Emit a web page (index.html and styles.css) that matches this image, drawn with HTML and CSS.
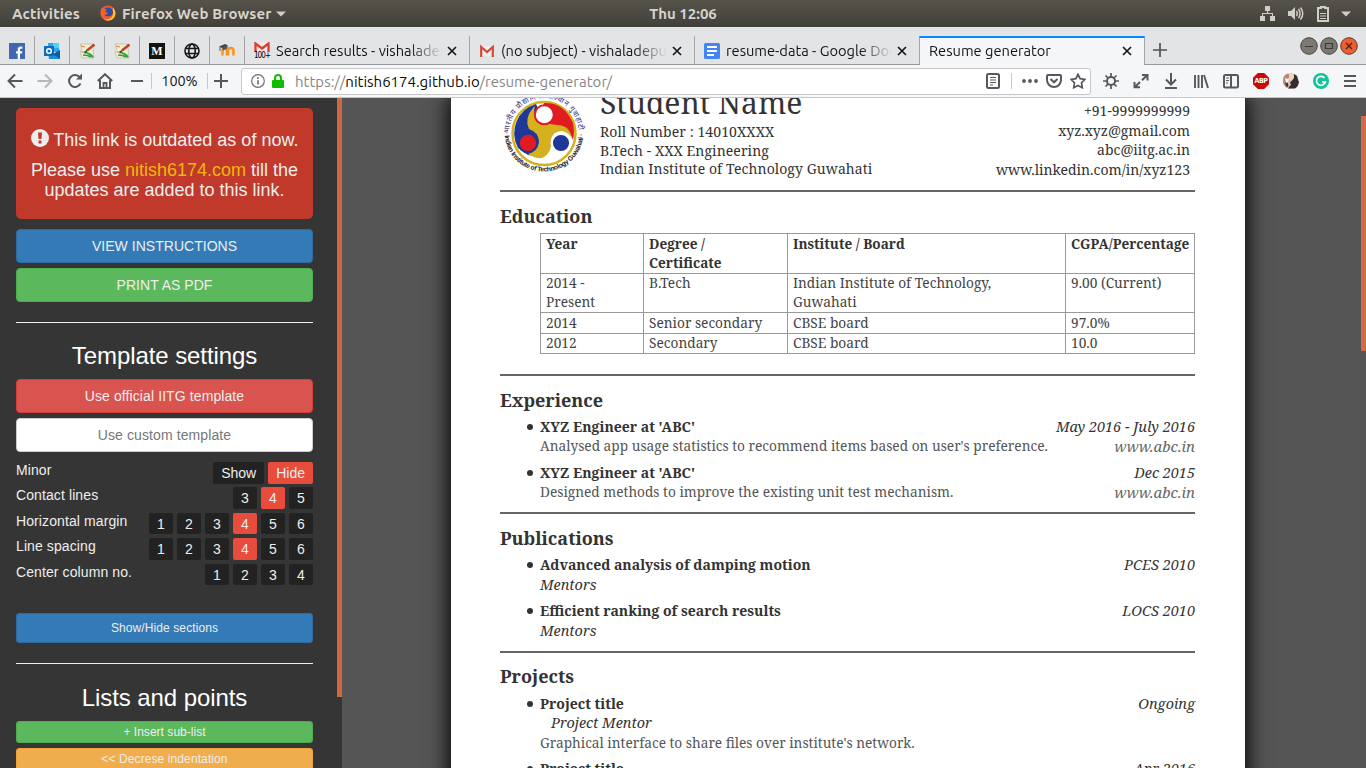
FILE: index.html
```
<!DOCTYPE html>
<html lang="en">
<head>
<meta charset="utf-8">
<title>Resume generator</title>
<link rel="stylesheet" href="styles.css">
</head>
<body>
<header class="topbar">
  <div class="top-left">
    <span>Activities</span>
    <svg class="ff" width="16" height="16" viewBox="0 0 16 16"><circle cx="8" cy="8.200" r="7.600" fill="#f4582b"/><path d="M13 2.500c3.500 4 3 9.500-1 12-2.500 1.500-6 1.500-8 0 4 .5 8-1 9-5 .5-3-.5-5 0-7z" fill="#ffc52b"/><circle cx="8" cy="7.200" r="4.800" fill="#2353a8"/><path d="M1 4l2-2 1 2 3 .5-2 2 3 1.500c-1 2-3 2-4 1.500 1 2 4 3 6.500 1-1 4-7 4.500-9 1C.5 9.500.3 6.500 1 4z" fill="#f4602b"/></svg>
    <span>Firefox Web Browser</span>
    <svg class="caret" width="10" height="6" viewBox="0 0 10 6"><path d="M0 .5h10L5 5.500z" fill="#d0cec9"/></svg>
  </div>
  <div class="clock">Thu 12:06</div>
  <div class="top-right">
    <svg width="15" height="15" viewBox="0 0 15 15" fill="#d0cec9"><path d="M5 0h5v5H8v2h5v3h2v5h-5v-5h2V8H3v2h2v5H0v-5h2V7h5V5H5z"/></svg>
    <svg width="16" height="15" viewBox="0 0 16 15" fill="none" stroke="#d0cec9"><path d="M0 5h3l4-4v13l-4-4H0z" fill="#d0cec9" stroke="none"/><path d="M8.500 5q1.500 2.500 0 5M10.500 3q3 4.500 0 9M12.500 1.500q4.500 6 0 12" stroke-width="1.500"/></svg>
    <svg width="12" height="16" viewBox="0 0 12 16" fill="none" stroke="#d0cec9"><path d="M4 2V1h4v1h3v13H1V2z" stroke-width="2"/><path d="M3 7.500h6M3 10h6M3 12.500h6" stroke-width="1.200"/></svg>
    <svg class="caret" width="10" height="6" viewBox="0 0 10 6"><path d="M0 .5h10L5 5.500z" fill="#d0cec9"/></svg>
  </div>
</header>

<nav class="tabs">
  <div class="pin"><svg width="16" height="16" viewBox="0 0 16 16"><rect width="16" height="16" fill="#4267b2"/><path d="M8.700 16v-5.500H7V8.300h1.700V6.500c0-2 1.200-3 3-3h1.700v2.200h-1.200c-.9 0-1.200.4-1.200 1.100v1.500h2.300l-.3 2.200h-2V16z" fill="#fff"/></svg></div>
  <div class="pin"><svg width="17" height="16" viewBox="0 0 17 16"><path d="M4 0h11v9H4z" fill="#28a8ea"/><path d="M9 0h6v5H9z" fill="#50d0ff"/><path d="M4 4h6v6H4z" fill="#0364b8"/><path d="M4 8l7 3 5-4v9H5z" fill="#1490df"/><path d="M16 7v9L9 11z" fill="#0a5ca8"/><rect y="3" width="10" height="10" fill="#0f6cbd"/><circle cx="5" cy="8" r="2.300" fill="none" stroke="#fff" stroke-width="1.500"/></svg></div>
  <div class="pin"><svg width="17" height="16" viewBox="0 0 17 16"><path d="M1 1l13 0 0 4 1 10-12 0-2-6 2-3z" fill="#f2edcf" stroke="#b9b79f" stroke-width=".7"/><path d="M2 3l4 1M2.500 9l4 0" stroke="#cf7b59"/><path d="M5 9.500c3 0 8 2 9 5M4 12c3 0 5 0 8 2" fill="none" stroke="#29a53d" stroke-width="1.700"/><path d="M15.500 1.500L8 7.500" stroke="#bd4529" stroke-width="2.600"/><path d="M8 7.500l-2 2" stroke="#333" stroke-width="1.400"/></svg></div>
  <div class="pin"><svg width="17" height="16" viewBox="0 0 17 16"><path d="M1 1l13 0 0 4 1 10-12 0-2-6 2-3z" fill="#f2edcf" stroke="#b9b79f" stroke-width=".7"/><path d="M2 3l4 1M2.500 9l4 0" stroke="#cf7b59"/><path d="M5 9.500c3 0 8 2 9 5M4 12c3 0 5 0 8 2" fill="none" stroke="#29a53d" stroke-width="1.700"/><path d="M15.500 1.500L8 7.500" stroke="#bd4529" stroke-width="2.600"/><path d="M8 7.500l-2 2" stroke="#333" stroke-width="1.400"/></svg></div>
  <div class="pin"><span class="medium">M</span></div>
  <div class="pin"><svg width="16" height="16" viewBox="0 0 16 16" fill="none" stroke="#15181b" stroke-width="1.600"><circle cx="8" cy="8" r="7"/><ellipse cx="8" cy="8" rx="3.200" ry="7"/><path d="M1.500 5.500h13M1.500 10.500h13"/></svg></div>
  <div class="pin"><svg width="17" height="16" viewBox="0 0 17 16"><path d="M3.500 12.500V8q0-2.300 2.200-2.300T8 8v4.500M9 12.500V7.500q0-2.500 2.700-2.500t2.800 2.500v5" fill="none" stroke="#f7941d" stroke-width="2.500"/><path d="M0 3.500L6 1l3 1.500-5 3z" fill="#44464a"/><path d="M1 4v4M4 5l4-2v2L4 7z" stroke="#555" fill="#555"/></svg></div>
  <div class="tab">
    <span class="gm100"><svg width="16" height="11" viewBox="0 0 16 11"><path d="M1 0h14v11H1z" fill="#f2e8e7"/><path d="M1.500 11V1.500L8 6.500l6.500-5V11" fill="none" stroke="#dc3b30" stroke-width="2.300"/></svg><b>100+</b></span>
    <span class="ttl">Search results - vishaladepu</span><svg class="x" viewBox="0 0 10 10"><path d="M1 1l8 8M9 1L1 9"/></svg>
  </div>
  <div class="tab">
    <svg class="fav" width="16" height="16" viewBox="0 0 16 16"><path d="M2 3h12v10H2z" fill="#eee"/><path d="M2.200 14V4L8 9l5.800-5v10" fill="none" stroke="#d34836" stroke-width="2.200"/></svg>
    <span class="ttl">(no subject) - vishaladepu</span><svg class="x" viewBox="0 0 10 10"><path d="M1 1l8 8M9 1L1 9"/></svg>
  </div>
  <div class="tab">
    <svg class="fav" width="16" height="16" viewBox="0 0 16 16"><rect width="16" height="16" rx="1.500" fill="#4285f4"/><path d="M3 4h10M3 8h10M3 12h7" stroke="#fff" stroke-width="1.800"/></svg>
    <span class="ttl">resume-data - Google Docs</span><svg class="x" viewBox="0 0 10 10"><path d="M1 1l8 8M9 1L1 9"/></svg>
  </div>
  <div class="tab active"><span class="ttl">Resume generator</span><svg class="x" viewBox="0 0 10 10"><path d="M1 1l8 8M9 1L1 9"/></svg></div>
  <svg class="plus" width="14" height="14" viewBox="0 0 14 14"><path d="M7 0v14M0 7h14" stroke="#4e5257" stroke-width="1.700"/></svg>
  <div class="winbtns">
    <svg width="18" height="18" viewBox="0 0 18 18"><circle cx="9" cy="9" r="8.300" fill="#7b7972" stroke="#47453f"/><path d="M5 9.500h8" stroke="#3c3b37"/></svg>
    <svg width="18" height="18" viewBox="0 0 18 18"><circle cx="9" cy="9" r="8.300" fill="#7b7972" stroke="#47453f"/><path d="M5.500 6.500h7v5h-7z" fill="none" stroke="#3c3b37" stroke-width="1.200"/></svg>
    <svg width="18" height="18" viewBox="0 0 18 18"><circle cx="9" cy="9" r="8.300" fill="#ec5f30" stroke="#5b3c2e"/><path d="M6 6l6 6M12 6l-6 6" stroke="#4b2414" stroke-width="1.300"/></svg>
  </div>
</nav>

<div class="toolbar">
  <div class="nav-l">
    <svg width="16" height="16" viewBox="0 0 16 16" class="ic"><path d="M15.500 8H1.500M8 1.500L1.500 8 8 14.500"/></svg>
    <svg width="16" height="16" viewBox="0 0 16 16" class="ic off"><path d="M.5 8h14M8 1.500L14.500 8 8 14.500"/></svg>
    <svg width="16" height="16" viewBox="0 0 16 16" class="ic"><path d="M13 4.500A6 6 0 1 0 13.500 10.500"/><path d="M15 .5V6.500H9z" fill="#55585c" stroke="none"/></svg>
    <svg width="16" height="16" viewBox="0 0 16 16" class="ic"><path d="M.8 8L8 1.200 15.200 8M3 7v8h10V7"/><path d="M6.500 15v-5h3v5" stroke-width="1.800"/></svg>
    <svg width="12" height="16" viewBox="0 0 12 16" class="ic"><path d="M0 8h12"/></svg>
    <i class="sep"></i><span class="zoom">100%</span><i class="sep"></i>
    <svg width="14" height="14" viewBox="0 0 14 14" class="ic"><path d="M7 0v14M0 7h14"/></svg>
  </div>
  <div class="url">
    <svg width="14" height="14" viewBox="0 0 14 14" fill="none" stroke="#6e7073"><circle cx="7" cy="7" r="6.300" stroke-width="1.200"/><path d="M7 6.200v4.300M7 3.300v1.600" stroke-width="1.700"/></svg>
    <svg class="lock" width="12" height="14" viewBox="0 0 12 14"><path d="M3 7V4q0-3 3-3t3 3v3" fill="none" stroke="#12bc00" stroke-width="2"/><rect y="6" width="12" height="8" rx="1" fill="#12bc00"/></svg>
    <span class="addr">https://<b>nitish6174.github.io</b>/resume-generator/</span>
    <svg class="ic" width="14" height="16" viewBox="0 0 14 16"><rect x="1" y="1" width="12" height="14" rx="1.500"/><path d="M4 4.500h6M4 7h6M4 9.500h6M4 12h3" stroke-width="1.200"/></svg>
    <i class="sep s2"></i>
    <svg class="dots" width="16" height="4" viewBox="0 0 16 4" fill="#55585c"><circle cx="2" cy="2" r="1.900"/><circle cx="8" cy="2" r="1.900"/><circle cx="14" cy="2" r="1.900"/></svg>
    <svg class="ic pk" width="16" height="16" viewBox="0 0 16 16"><path d="M2 2h12q1 0 1 1v4a7 7 0 0 1-14 0V3q0-1 1-1zM4.500 6L8 9.300 11.500 6"/></svg>
    <svg class="ic" width="16" height="16" viewBox="0 0 16 16"><path d="M8 1.300l2.100 4.400 4.900.7-3.500 3.400.8 4.900L8 12.400l-4.300 2.300.8-4.900L1 6.400l4.900-.7z" stroke-width="1.700"/></svg>
  </div>
  <div class="nav-r">
    <svg class="ic" width="16" height="16" viewBox="0 0 16 16"><circle cx="8" cy="8" r="4"/><path d="M8 0v4M8 12v4M0 8h4M12 8h4M2.500 2.500l2.500 2.500M11 11l2.500 2.500M13.500 2.500L11 5M5 11l-2.500 2.500" stroke-width="1.700"/></svg>
    <svg class="ic" width="16" height="16" viewBox="0 0 16 16"><path d="M9 2h5.500v5.500M14.300 2L9 7.300M7 14.300H1.500V9M1.700 14.300L7 9"/></svg>
    <svg class="ic" width="16" height="16" viewBox="0 0 16 16"><path d="M8 0v11.500M3 6.500l5 5 5-5M2 15h12"/></svg>
    <svg class="ic" width="16" height="16" viewBox="0 0 16 16"><path d="M2 2v13M5.500 2v13M9 2v13M11 2l4 13" stroke-width="1.900"/></svg>
    <svg class="ic" width="16" height="16" viewBox="0 0 16 16"><rect x="1" y="2" width="14" height="12.500" rx="1.500"/><path d="M8 2v12" /><path d="M3 5h3M3 7.500h3M3 10h2" stroke-width="1.200"/></svg>
    <span class="abp"><b>ABP</b></span>
    <svg width="16" height="16" viewBox="0 0 16 16"><circle cx="8" cy="8" r="7.800" fill="#d9c3b7"/><path d="M0 8q-.2-6 5-7.500L7 4 4 8l2 5-2 2Q0 12 0 8z" fill="#b98579"/><path d="M11 1l3 2 1 4 1 2q-1 5-4 6.500H5l3-4-1-2 3-3z" fill="#342a30"/><path d="M2 9l3 1 0 4-2-1z" fill="#4a3038"/><path d="M6 2q3-2 5 0v3L9 7 6 6z" fill="#efd9ac"/><path d="M2 5l2 1 2-1-1 4-2 1z" fill="#fff"/></svg>
    <svg width="16" height="16" viewBox="0 0 16 16"><circle cx="8" cy="8" r="8" fill="#15c39a"/><path d="M11.500 5A4.500 4.500 0 1 0 12.300 9H9" fill="none" stroke="#fff" stroke-width="1.700"/></svg>
    <svg class="ic" width="14" height="16" viewBox="0 0 14 16"><path d="M1 3h12M1 8h12M1 13h12"/></svg>
  </div>
</div>

<main class="view">
  <aside class="side">
    <div class="alert">
      <p><svg class="ex" width="18" height="18" viewBox="0 0 18 18"><circle cx="9" cy="9" r="9" fill="#eee"/><path d="M7 3.500h4l-.6 6.500H7.600zM7.500 11.500h3v3h-3z" fill="#c0392b"/></svg> This link is outdated as of now.</p>
      <p>Please use <a>nitish6174.com</a> till the<br>updates are added to this link.</p>
    </div>
    <div class="btn blue">VIEW INSTRUCTIONS</div>
    <div class="btn green">PRINT AS PDF</div>
    <hr>
    <h3>Template settings</h3>
    <div class="btn red">Use official IITG template</div>
    <div class="btn white">Use custom template</div>
    <div class="opts">
      <div class="opt"><span>Minor</span><div><i>Show</i><i class="on">Hide</i></div></div>
      <div class="opt"><span>Contact lines</span><div><i>3</i><i class="on">4</i><i>5</i></div></div>
      <div class="opt"><span>Horizontal margin</span><div><i>1</i><i>2</i><i>3</i><i class="on">4</i><i>5</i><i>6</i></div></div>
      <div class="opt"><span>Line spacing</span><div><i>1</i><i>2</i><i>3</i><i class="on">4</i><i>5</i><i>6</i></div></div>
      <div class="opt"><span>Center column no.</span><div><i>1</i><i>2</i><i>3</i><i>4</i></div></div>
    </div>
    <div class="btn blue sm">Show/Hide sections</div>
    <hr>
    <h3 class="lists">Lists and points</h3>
    <div class="btn green xs">+ Insert sub-list</div>
    <div class="btn orange xs">&lt;&lt; Decrese indentation</div>
  </aside>
  <div class="sbar"></div>
  <section class="canvas">
    <article class="page">
      <div class="head">
        <svg class="logo" width="90" height="90" viewBox="0 0 90 90">
          <defs><path id="arcTop" d="M9.300 44A34.700 34.700 0 0 1 78.700 44"/><path id="arcBot" d="M4.500 43A39.500 39.500 0 0 0 83.500 43"/></defs>
          <circle cx="44" cy="44.500" r="31.500" fill="#fff" stroke="#d5b11d" stroke-width="2.500"/>
          <path d="M36 15A30.500 30.500 0 0 0 18 59L28 66Q38 68 43 60L46 36z" fill="#1f3797"/>
          <path d="M44 14Q64 13 73 34Q75 43 73 51Q68 37 56 37L38 32z" fill="#e11b22"/>
          <path d="M33 19Q24 29 29 40Q38 43 39 52Q39 60 28 65Q42 74 50 64Q52 58 51 52Q52 42 62 42Q70 44 72 50Q70 36 57 36Q46 35 38 31Q32 26 35 17z" fill="#d5b11d"/>
          <path d="M51 57Q50 66 40 70Q53 75 64 67Q72 60 73 51Q70 60 58 63z" fill="#fff"/>
          <circle cx="44.300" cy="25.800" r="9.500" fill="#fff" stroke="#e11b22" stroke-width="2"/>
          <circle cx="28" cy="54" r="9.300" fill="#e11b22" stroke="#1f3797" stroke-width="2.200"/>
          <circle cx="61" cy="54" r="9.300" fill="#1f3797" stroke="#fff" stroke-width="2.500"/>
          <text class="hi"><textPath href="#arcTop" textLength="106">भारतीय प्रौद्योगिकी संस्थान गुवाहाटी</textPath></text>
          <text class="en"><textPath href="#arcBot" textLength="122">· Indian Institute of Technology Guwahati ·</textPath></text>
        </svg>
        <div class="who">
          <h1>Student Name</h1>
          <p>Roll Number : 14010XXXX</p><p>B.Tech - XXX Engineering</p><p>Indian Institute of Technology Guwahati</p>
        </div>
        <div class="contact"><p>+91-9999999999</p><p>xyz.xyz@gmail.com</p><p>abc@iitg.ac.in</p><p>www.linkedin.com/in/xyz123</p></div>
      </div>
      <div class="sec edu">
        <h2>Education</h2>
        <table>
          <colgroup><col class="c1"><col class="c2"><col class="c3"><col class="c4"></colgroup>
          <tr class="r1"><th>Year</th><th>Degree /<br>Certificate</th><th>Institute / Board</th><th>CGPA/Percentage</th></tr>
          <tr class="r2"><td>2014 -<br>Present</td><td>B.Tech</td><td>Indian Institute of Technology,<br>Guwahati</td><td>9.00 (Current)</td></tr>
          <tr class="r3"><td>2014</td><td>Senior secondary</td><td>CBSE board</td><td>97.0%</td></tr>
          <tr class="r4"><td>2012</td><td>Secondary</td><td>CBSE board</td><td>10.0</td></tr>
        </table>
      </div>
      <div class="sec exp">
        <h2>Experience</h2>
        <ul>
          <li><div><b>XYZ Engineer at 'ABC'</b><em>May 2016 - July 2016</em></div><div><span>Analysed app usage statistics to recommend items based on user's preference.</span><em class="link">www.abc.in</em></div></li>
          <li><div><b>XYZ Engineer at 'ABC'</b><em>Dec 2015</em></div><div><span>Designed methods to improve the existing unit test mechanism.</span><em class="link">www.abc.in</em></div></li>
        </ul>
      </div>
      <div class="sec pub">
        <h2>Publications</h2>
        <ul>
          <li><div><b>Advanced analysis of damping motion</b><em>PCES 2010</em></div><div><em class="mentor">Mentors</em></div></li>
          <li><div><b>Efficient ranking of search results</b><em>LOCS 2010</em></div><div><em class="mentor">Mentors</em></div></li>
        </ul>
      </div>
      <div class="sec proj">
        <h2>Projects</h2>
        <ul>
          <li><div><b>Project title</b><em>Ongoing</em></div><div><em class="pm">Project Mentor</em></div><div><span>Graphical interface to share files over institute's network.</span></div></li>
          <li><div><b>Project title</b><em>Apr 2016</em></div></li>
        </ul>
      </div>
    </article>
    <div class="pagebar"></div>
  </section>
</main>
</body>
</html>
```
FILE: styles.css
```
* { box-sizing: border-box; }
body { margin: 0; width: 1366px; height: 768px; overflow: hidden; display: flex; flex-direction: column; font-family: "Liberation Sans", Arial, sans-serif; }
svg { display: block; flex: none; }
p, h1, h2, h3, ul { margin: 0; padding: 0; font-weight: normal; }
.topbar, .tabs, .toolbar { font-family: Ubuntu, "Noto Sans", sans-serif; flex: none; }

.topbar { height: 27px; background: linear-gradient(#56534a, #403f3a); color: #d6d3cc; font-size: 15px; font-weight: 600; display: grid; grid-template-columns: 1fr auto 1fr; align-items: center; line-height: 26px; }
.top-left { display: flex; align-items: center; padding-left: 12px; letter-spacing: .12px; }
.ff { margin: 0 6px 1px 20px; }
.top-left .caret { margin-left: 4px; }
.clock { font-size: 15px; line-height: 25px; margin-top: -1px; }
.top-right { display: flex; align-items: center; justify-content: flex-end; gap: 13px; padding-right: 15px; }
.top-right svg:nth-child(3) { margin-right: -1px; }

.tabs { height: 38px; background: #e3e4e6; display: flex; align-items: stretch; padding-top: 9px; border-bottom: 1px solid #96989b; font-size: 14.670px; color: #111417; }
.pin { width: 35px; border-right: 1px solid #a3a5a7; display: flex; align-items: center; justify-content: center; padding-top: 1px; }
.medium { width: 16px; height: 16px; background: #14140f; color: #fff; font: bold 12px/16px "Liberation Serif", serif; text-align: center; }
.tab { width: 225px; border-right: 1px solid #a3a5a7; display: flex; align-items: center; padding: 1px 12px 0 9px; }
.ttl { flex: 1; margin: 0 5px 0 6px; overflow: hidden; white-space: nowrap; line-height: 22px; -webkit-mask-image: linear-gradient(to right, #000 calc(100% - 32px), transparent); mask-image: linear-gradient(to right, #000 calc(100% - 32px), transparent); }
.active .ttl { margin-left: 0; }
.active { background: #f5f6f7; border-left: 1px solid #a3a5a7; margin: 0 0 -1px -1px; width: 226px; border-top: 2px solid #0a84ff; padding-top: 0; padding-bottom: 1px; }
.x { width: 10px; height: 10px; stroke: #15181b; stroke-width: 1.700; }
.gm100 { display: flex; flex-direction: column; align-items: center; width: 16px; height: 17px; }
.gm100 b { font: 8px/7px "DejaVu Sans Condensed", sans-serif; letter-spacing: -.9px; margin-top: -1px; background: #e3e4e6; color: #000; }
.plus { margin: 7px 0 0 8px; }
.winbtns { margin: 1px 8px 0 auto; display: flex; gap: 2px; }

.toolbar { height: 33px; background: #f5f6f7; border-bottom: 1px solid #c5c6c8; display: flex; align-items: center; font-size: 14.670px; color: #111417; }
.ic { fill: none; stroke: #55585c; stroke-width: 2; }
.off { stroke: #b5b7b9; }
.sep { width: 1px; height: 16px; background: #c6c8ca; flex: none; }
.nav-l { width: 241px; display: flex; align-items: center; padding-left: 7px; }
.nav-l svg { margin-right: 14px; }
.nav-l svg:nth-of-type(4) { margin-right: 18px; }
.nav-l svg:nth-of-type(5) { margin: 0 8px 0 0; }
.nav-l .sep + svg { margin: 0 0 0 6px; }
.zoom { font-size: 14.400px; width: 55px; text-align: center; }
.url { width: 850px; height: 27px; background: #fff; border: 1px solid #c6c7c9; border-radius: 3px; display: flex; align-items: center; padding: 0 4px 0 9px; }
.lock { margin: 0 11px 0 7px; }
.addr { flex: 1; color: #858688; font-size: 15px; }
.addr b { font-weight: normal; color: #0c0c0d; }
.s2 { margin: 0 10px 0 11px; }
.url .ic:first-of-type { margin-left: 1px; }
.pk { margin: 0 8px; }
.nav-r { display: flex; align-items: center; padding-left: 12px; gap: 14px; }
.abp { width: 16px; height: 16px; background: #cc0909; clip-path: polygon(30% 0, 70% 0, 100% 30%, 100% 70%, 70% 100%, 30% 100%, 0 70%, 0 30%); color: #fff; font: bold 7px/16px "DejaVu Sans Condensed", sans-serif; letter-spacing: -.4px; text-align: center; }

.view { flex: 1; min-height: 0; display: flex; background: #555; }
.side { width: 337px; background: #353535; padding: 10px 24px 0 16px; overflow: hidden; color: #eee; }
.sbar { width: 5px; background: linear-gradient(#cd6840 599px, #353535 599px); }
.alert { height: 111px; background: #c0392b; border-radius: 5px; padding-top: 21px; text-align: center; font-size: 18px; line-height: 20px; margin-bottom: 10px; }
.alert p + p { margin-top: 10px; }
.alert a { color: #f1b70f; }
.ex { display: inline-block; vertical-align: -1px; }
.btn { height: 34px; border: 1px solid; border-radius: 4px; text-align: center; font-size: 14px; letter-spacing: .03px; line-height: 32px; margin-bottom: 5px; color: #eee; }
.blue { background: #337ab7; border-color: #2e6da4; }
.green { background: #5cb85c; border-color: #4cae4c; }
.red { background: #d9534f; border-color: #d43f3a; letter-spacing: .1px; }
.white { background: #fff; border-color: #ccc; color: #777; letter-spacing: .1px; }
.orange { background: #f0ad4e; border-color: #eea236; letter-spacing: .1px; }
.side hr { border: 0; border-top: 1px solid #eee; margin: 20px 0; }
.side h3 { font-size: 24px; letter-spacing: -.08px; line-height: 26px; text-align: center; color: #fff; margin-bottom: 10px; }
.side h3.lists { padding-top: 1px; }
.opts { padding-top: 5px; height: 156px; }
.opt { display: flex; justify-content: space-between; height: 25.400px; font-size: 14px; line-height: 20px; }
.opt > span { margin-top: -2px; letter-spacing: .1px; }
.opt > div { display: flex; gap: 4px; }
.opt i { font-style: normal; background: #222; border-radius: 2px; padding: 0 8px; min-width: 24px; height: 21.500px; line-height: 22px; text-align: center; }
.opt i.on { background: #e74c3c; }
.sm { height: 30px; font-size: 12px; line-height: 28px; border-radius: 3px; letter-spacing: .1px; }
.xs { height: 22px; font-size: 12px; line-height: 20px; border-radius: 3px; }

.canvas { flex: 1; display: flex; overflow: hidden; }
.page { width: 794px; margin-left: 109px; height: 800px; background: #fff; box-shadow: 0 0 20px 2px #000; padding: 0 50px 0 49px; font-family: "Noto Serif", "DejaVu Serif Condensed", serif; color: #333; }
.pagebar { width: 5px; height: 235px; margin: 18px 0 0 auto; background: #d06c46; }
.head { display: flex; height: 94px; border-bottom: 2px solid #666; font-size: 14px; line-height: 18.670px; }
.logo { margin: -9px 10px 0 0; font-family: "Noto Sans", sans-serif; overflow: visible; }
.hi { font-size: 7.500px; fill: #33278c; }
.en { font-family: "Liberation Sans", sans-serif; font-size: 6.700px; fill: #222; font-weight: bold; }
.who h1 { font-size: 30px; line-height: 40px; margin: -15px 0 0; }
.who p { letter-spacing: .08px; }
.contact { margin-left: auto; text-align: right; padding: 3px 5px 0 0; line-height: 19.500px; }
.sec { border-bottom: 2px solid #666; font-size: 13.700px; line-height: 19.500px; }
.sec h2 { font-size: 18px; font-weight: bold; line-height: 25px; padding-top: 12px; }
.edu { height: 184px; }
.exp { height: 138px; }
.pub { height: 139px; }
.proj { border: 0; }
.sec.proj h2 { padding-top: 11px; }
table { border-collapse: collapse; width: 655px; margin: 4px 0 0 40px; table-layout: fixed; color: #444; }
.c1 { width: 103px; } .c2 { width: 144px; } .c3 { width: 278px; } .c4 { width: 129px; }
th, td { border: 1px solid #999; padding: 0 0 0 5px; vertical-align: top; text-align: left; white-space: nowrap; }
th { color: #333; font-size: 13.600px; }
.r1 { height: 40px; line-height: 19.400px; } .r2 { height: 39px; line-height: 18.500px; } .r3 { height: 21px; line-height: 19px; } .r4 { height: 20px; line-height: 18px; }
.sec ul { list-style: none; padding: 4px 0 0 40px; }
.sec.proj ul { padding-top: 5px; }
li { margin-bottom: 7px; position: relative; }
li::before { content: ""; position: absolute; left: -13px; top: 7px; width: 6px; height: 6px; border-radius: 50%; background: #333; }
li > div { display: flex; justify-content: space-between; height: 19.400px; white-space: nowrap; }
li b { font-size: 14.050px; }
li em { font-size: 14.450px; }
li span { color: #555; }
li em.link { color: #666; font-size: 14.900px; padding-top: 1px; }
.mentor { padding-top: 1px; }
.pm { margin-left: 11px; }
```
